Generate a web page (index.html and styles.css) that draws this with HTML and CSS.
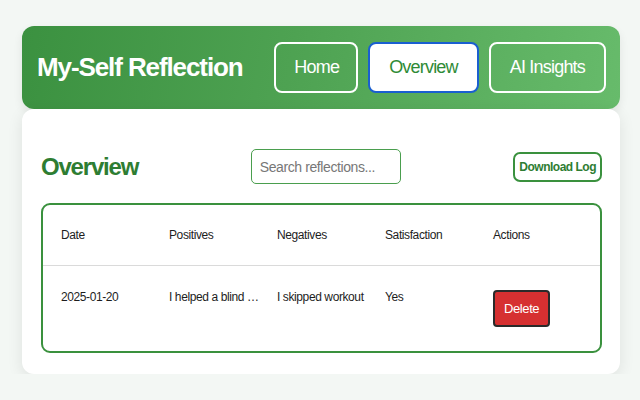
FILE: index.html
```html
<!DOCTYPE html>
<html lang="en">
<head>
<meta charset="utf-8">
<title>My-Self Reflection</title>
<link rel="stylesheet" href="styles.css">
</head>
<body>
<div class="app">
  <header class="topbar">
    <h1 class="brand">My-Self Reflection</h1>
    <nav class="nav">
      <button class="nav-btn">Home</button>
      <button class="nav-btn active">Overview</button>
      <button class="nav-btn">AI Insights</button>
    </nav>
  </header>
  <main class="card">
    <div class="toolbar">
      <h2 class="title">Overview</h2>
      <input class="search" type="text" placeholder="Search reflections...">
      <button class="download">Download Log</button>
    </div>
    <div class="table-wrap">
      <table class="log">
        <thead>
          <tr>
            <th>Date</th>
            <th>Positives</th>
            <th>Negatives</th>
            <th>Satisfaction</th>
            <th class="last">Actions</th>
          </tr>
        </thead>
        <tbody>
          <tr>
            <td>2025-01-20</td>
            <td>I helped a blind …</td>
            <td>I skipped workout</td>
            <td>Yes</td>
            <td class="last"><button class="delete">Delete</button></td>
          </tr>
        </tbody>
      </table>
    </div>
  </main>
</div>
</body>
</html>
```

FILE: styles.css
```css
html, body {
  margin: 0;
  padding: 0;
}
body {
  background: #f3f7f4;
  font-family: "Liberation Sans", Arial, sans-serif;
  color: #222;
}
.app {
  width: 598px;
  margin: 26px 0 0 22px;
}
.topbar {
  display: flex;
  align-items: center;
  justify-content: space-between;
  padding: 16px 14px 16px 15px;
  border-radius: 12px;
  background: linear-gradient(100deg, #3b9140 0%, #4ea252 45%, #67bb6b 100%);
  box-shadow: 0 4px 10px rgba(0, 0, 0, 0.08);
}
.brand {
  margin: 0;
  color: #fff;
  font-size: 26px;
  font-weight: bold;
  letter-spacing: -1.1px;
}
.nav {
  display: flex;
  gap: 10px;
}
.nav-btn {
  font-family: "Liberation Sans", Arial, sans-serif;
  font-size: 18px;
  letter-spacing: -0.8px;
  line-height: 19px;
  padding: 14px 19px;
  color: #fff;
  background: transparent;
  border: 2px solid #fff;
  border-radius: 8px;
}
.nav-btn:first-child {
  padding-left: 18px;
  padding-right: 17px;
}
.nav-btn.active {
  background: #fff;
  color: #2e8b36;
  border-color: #1a5fd0;
}
.card {
  display: block;
  background: #fff;
  border-radius: 12px;
  padding: 40px 18px 21px 19px;
  box-shadow: 0 4px 16px rgba(0, 0, 0, 0.09);
}
.toolbar {
  display: flex;
  align-items: center;
  justify-content: space-between;
  margin-bottom: 19px;
}
.title {
  margin: 0;
  color: #2e7d32;
  font-size: 24px;
  font-weight: bold;
  letter-spacing: -1.2px;
}
.search {
  width: 150px;
  height: 35px;
  box-sizing: border-box;
  padding: 0 8px;
  border: 1px solid #4a9e4e;
  border-radius: 5px;
  font-family: "Liberation Sans", Arial, sans-serif;
  font-size: 14px;
  letter-spacing: -0.4px;
  color: #333;
}
.search::placeholder {
  color: #777;
}
.download {
  font-family: "Liberation Sans", Arial, sans-serif;
  font-size: 12px;
  font-weight: bold;
  letter-spacing: -0.5px;
  line-height: 14px;
  padding: 6px 4px;
  color: #2e7d32;
  background: #fff;
  border: 2px solid #3a913e;
  border-radius: 7px;
}
.table-wrap {
  border: 2px solid #3a913e;
  border-radius: 9px;
  overflow: hidden;
}
.log {
  border-collapse: collapse;
  table-layout: fixed;
  width: 100%;
}
.log th,
.log td {
  width: 90px;
  padding: 24px 0 24px 18px;
  text-align: left;
  vertical-align: top;
  font-size: 12px;
  font-weight: normal;
  letter-spacing: -0.4px;
  line-height: 14px;
  white-space: nowrap;
  overflow: hidden;
  text-overflow: ellipsis;
  color: #1d1d1d;
}
.log th.last,
.log td.last {
  width: auto;
}
.log th {
  padding-top: 23px;
  padding-bottom: 23px;
}
.log thead tr {
  border-bottom: 1px solid #dadada;
}
.delete {
  font-family: "Liberation Sans", Arial, sans-serif;
  font-size: 13px;
  letter-spacing: -0.4px;
  line-height: 15px;
  padding: 9px 9px;
  color: #fff;
  background: #d63031;
  border: 2px solid #2a2a2a;
  border-radius: 4px;
}
```
